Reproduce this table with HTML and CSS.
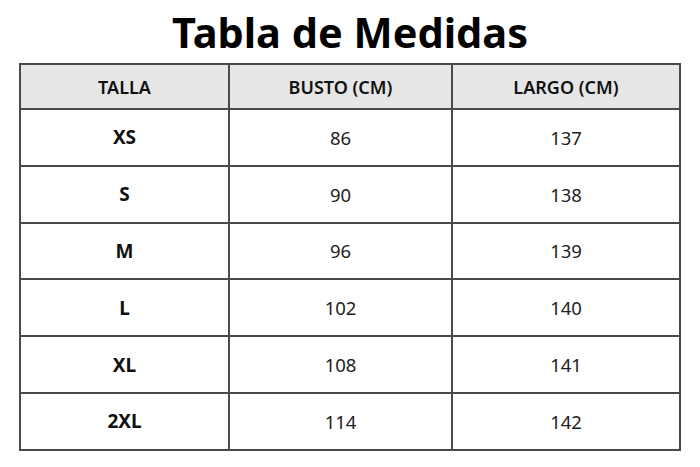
FILE: index.html
```html
<!DOCTYPE html>
<html lang="es">
<head>
<meta charset="utf-8">
<title>Tabla de Medidas</title>
<link rel="stylesheet" href="styles.css">
</head>
<body>
<main class="page">
  <h1 class="title">Tabla de Medidas</h1>
  <table class="sizes">
    <colgroup>
      <col class="c1"><col class="c2"><col class="c3">
    </colgroup>
    <thead>
      <tr><th>TALLA</th><th>BUSTO (CM)</th><th>LARGO (CM)</th></tr>
    </thead>
    <tbody>
      <tr><td class="size">XS</td><td>86</td><td>137</td></tr>
      <tr><td class="size">S</td><td>90</td><td>138</td></tr>
      <tr><td class="size">M</td><td>96</td><td>139</td></tr>
      <tr><td class="size">L</td><td>102</td><td>140</td></tr>
      <tr><td class="size">XL</td><td>108</td><td>141</td></tr>
      <tr><td class="size">2XL</td><td>114</td><td>142</td></tr>
    </tbody>
  </table>
</main>
</body>
</html>
```
FILE: styles.css
```css
html, body {
  margin: 0;
  padding: 0;
  background: #ffffff;
}
body {
  font-family: "Noto Sans", "Open Sans", sans-serif;
  color: #111;
}
.page {
  width: 700px;
  height: 467px;
  padding-top: 5px;
  box-sizing: border-box;
}
.title {
  margin: 0;
  text-align: center;
  font-size: 41.5px;
  font-weight: 700;
  line-height: 54px;
  color: #000;
}
.sizes {
  margin: 4px 0 0 19px;
  width: 660px;
  border-collapse: collapse;
  table-layout: fixed;
}
.sizes th, .sizes td {
  border: 2px solid #4a4a4a;
  text-align: center;
  padding: 0;
}
.sizes th {
  background: #e6e6e6;
  height: 43px;
  font-size: 18px;
  font-weight: 600;
  color: #111;
}
.sizes td {
  height: 54.8px;
  font-size: 18.5px;
  font-weight: 400;
  color: #222;
}
.sizes td.size {
  font-size: 19px;
  font-weight: 700;
  color: #111;
}
.c1 { width: 209px; }
.c2 { width: 223px; }
.c3 { width: 228px; }
```
